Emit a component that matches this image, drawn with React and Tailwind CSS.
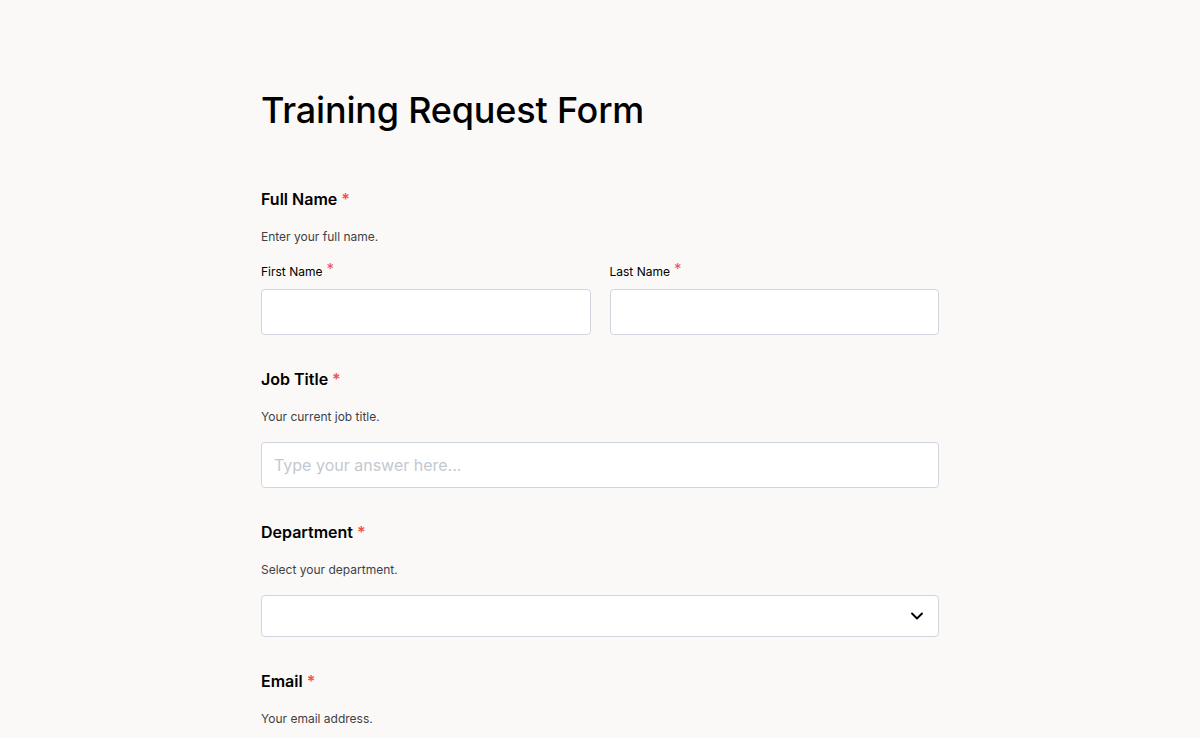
import { ChevronDown } from 'lucide-react'

function Req() {
    return <span className="text-[#f05252] ml-1">*</span>
}

function SubReq() {
    return <span className="text-[#f05252] ml-1 text-[15px] leading-none relative -top-[2px]">*</span>
}

function FieldLabel({ children }) {
    return (
        <div className="text-[16px] leading-6 font-semibold text-black">
            {children}
            <Req />
        </div>
    )
}

function Help({ children }) {
    return <p className="mt-[18px] text-[12px] leading-4 text-[#3f3f46]">{children}</p>
}

export default function App() {
    return (
        <div className="min-h-screen w-full bg-[#faf9f7] font-['Inter',sans-serif]">
            <div className="max-w-[678px] mx-auto pt-[88px] pb-20">
                <h1 className="text-[36px] leading-[44px] font-medium text-black tracking-[-0.2px]">
                    Training Request Form
                </h1>

                {/* Full name */}
                <section className="mt-[55px]">
                    <FieldLabel>Full Name</FieldLabel>
                    <Help>Enter your full name.</Help>
                    <div className="mt-[18px] grid grid-cols-2 gap-[19px]">
                        <div>
                            <div className="text-[12px] leading-4 text-black">
                                First Name
                                <SubReq />
                            </div>
                            <input className="mt-[9px] w-full h-[46px] bg-white border border-[#d3d5de] rounded-[4px] px-3 outline-none" />
                        </div>
                        <div>
                            <div className="text-[12px] leading-4 text-black">
                                Last Name
                                <SubReq />
                            </div>
                            <input className="mt-[9px] w-full h-[46px] bg-white border border-[#d3d5de] rounded-[4px] px-3 outline-none" />
                        </div>
                    </div>
                </section>

                {/* Job title */}
                <section className="mt-[32px]">
                    <FieldLabel>Job Title</FieldLabel>
                    <Help>Your current job title.</Help>
                    <input
                        placeholder="Type your answer here..."
                        className="mt-[17px] w-full h-[46px] bg-white border border-[#d3d5de] rounded-[4px] px-3 text-[16px] text-black placeholder:text-[#c4c8d0] outline-none"
                    />
                </section>

                {/* Department */}
                <section className="mt-[32px]">
                    <FieldLabel>Department</FieldLabel>
                    <Help>Select your department.</Help>
                    <div className="mt-[17px] w-full h-[42px] bg-white border border-[#d3d5de] rounded-[4px] flex items-center justify-end pr-[11px]">
                        <ChevronDown className="w-5 h-5 text-black" strokeWidth={2.25} />
                    </div>
                </section>

                {/* Email */}
                <section className="mt-[32px]">
                    <FieldLabel>Email</FieldLabel>
                    <Help>Your email address.</Help>
                    <input className="mt-[17px] w-full h-[46px] bg-white border border-[#d3d5de] rounded-[4px] px-3 outline-none" />
                </section>
            </div>
        </div>
    )
}
